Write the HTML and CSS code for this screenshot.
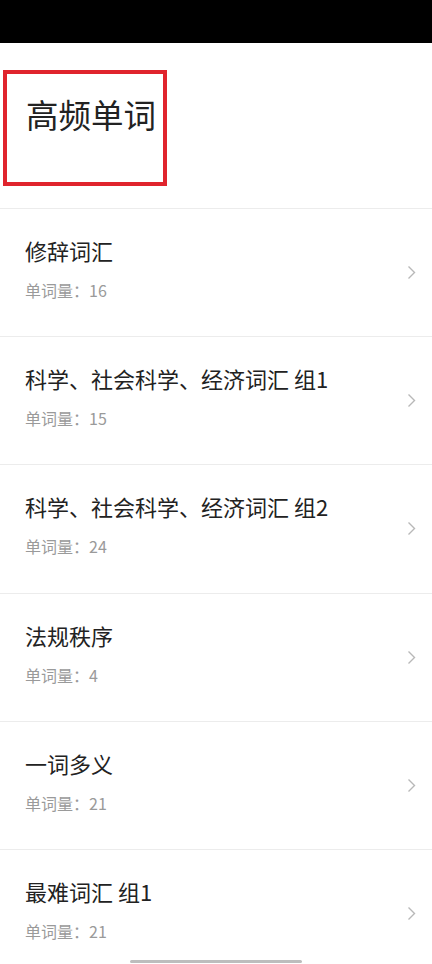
FILE: index.html
```html
<!DOCTYPE html>
<html lang="zh-CN">
<head>
<meta charset="utf-8">
<title>高频单词</title>
<link rel="stylesheet" href="styles.css">
</head>
<body>
<div class="statusbar"></div>
<header class="header">
  <div class="title-box"><h1 class="title">高频单词</h1></div>
</header>
<ul class="list">
  <li class="row">
    <div class="row-text"><div class="row-title">修辞词汇</div><div class="row-sub">单词量：16</div></div>
    <svg class="chev" width="9" height="15" viewBox="0 0 9 15"><polyline points="1.5,1.5 7.5,7.5 1.5,13.5" fill="none" stroke="#b8b8b8" stroke-width="1.4"/></svg>
  </li>
  <li class="row">
    <div class="row-text"><div class="row-title">科学、社会科学、经济词汇 组1</div><div class="row-sub">单词量：15</div></div>
    <svg class="chev" width="9" height="15" viewBox="0 0 9 15"><polyline points="1.5,1.5 7.5,7.5 1.5,13.5" fill="none" stroke="#b8b8b8" stroke-width="1.4"/></svg>
  </li>
  <li class="row">
    <div class="row-text"><div class="row-title">科学、社会科学、经济词汇 组2</div><div class="row-sub">单词量：24</div></div>
    <svg class="chev" width="9" height="15" viewBox="0 0 9 15"><polyline points="1.5,1.5 7.5,7.5 1.5,13.5" fill="none" stroke="#b8b8b8" stroke-width="1.4"/></svg>
  </li>
  <li class="row">
    <div class="row-text"><div class="row-title">法规秩序</div><div class="row-sub">单词量：4</div></div>
    <svg class="chev" width="9" height="15" viewBox="0 0 9 15"><polyline points="1.5,1.5 7.5,7.5 1.5,13.5" fill="none" stroke="#b8b8b8" stroke-width="1.4"/></svg>
  </li>
  <li class="row">
    <div class="row-text"><div class="row-title">一词多义</div><div class="row-sub">单词量：21</div></div>
    <svg class="chev" width="9" height="15" viewBox="0 0 9 15"><polyline points="1.5,1.5 7.5,7.5 1.5,13.5" fill="none" stroke="#b8b8b8" stroke-width="1.4"/></svg>
  </li>
  <li class="row">
    <div class="row-text"><div class="row-title">最难词汇 组1</div><div class="row-sub">单词量：21</div></div>
    <svg class="chev" width="9" height="15" viewBox="0 0 9 15"><polyline points="1.5,1.5 7.5,7.5 1.5,13.5" fill="none" stroke="#b8b8b8" stroke-width="1.4"/></svg>
  </li>
</ul>
<div class="home-indicator"></div>
</body>
</html>
```
FILE: styles.css
```css
html, body {
  margin: 0;
  padding: 0;
  background: #fff;
  height: 964px;
  overflow: hidden;
  font-family: "Noto Sans CJK SC", "Noto Sans", sans-serif;
}
.statusbar {
  height: 43px;
  background: #000;
}
.header {
  padding: 27px 0 22px 3px;
  border-bottom: 1px solid #ececec;
}
.title-box {
  box-sizing: border-box;
  width: 164px;
  height: 116px;
  border: 4px solid #e0242d;
  padding: 18px 0 0 19px;
}
.title {
  margin: 0;
  font-size: 32.5px;
  line-height: 44px;
  font-weight: 400;
  color: #222;
  white-space: nowrap;
}
.list {
  list-style: none;
  margin: 0;
  padding: 0;
}
.row {
  box-sizing: border-box;
  height: 128.2px;
  display: flex;
  align-items: center;
  padding: 0 16px 0 25px;
  border-bottom: 1px solid #ececec;
}
.row-text {
  flex: 1;
  align-self: flex-start;
  padding-top: 27px;
}
.row-title {
  font-size: 22px;
  line-height: 28px;
  color: #222;
  white-space: nowrap;
}
.row-sub {
  margin-top: 15px;
  font-size: 16px;
  line-height: 22px;
  color: #9a9a9a;
}
.chev {
  flex: none;
}
.home-indicator {
  position: fixed;
  left: 130px;
  bottom: 1px;
  width: 172px;
  height: 3px;
  border-radius: 2px;
  background: #bdbdbd;
}
```
